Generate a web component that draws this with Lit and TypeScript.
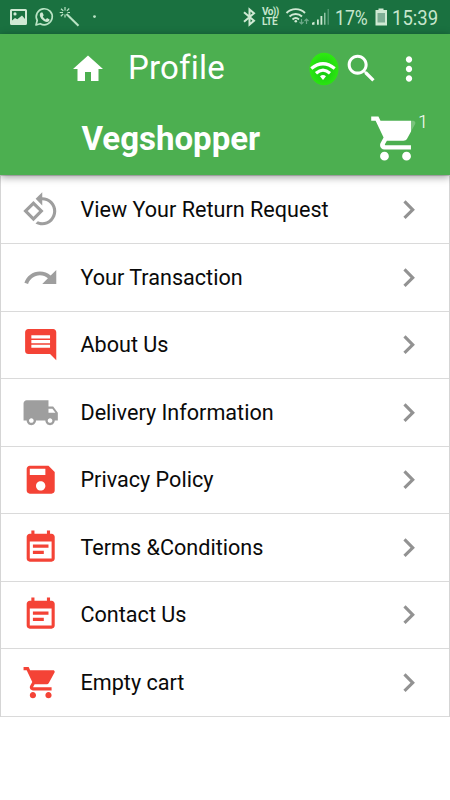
import { LitElement, html, css, svg } from "lit";
import { customElement, property } from "lit/decorators.js";

const ICONS: Record<string, string> = {
  home: "M10 20v-6h4v6h5v-8h3L12 3 2 12h3v8z",
  search:
    "M15.5 14h-.79l-.28-.27C15.41 12.59 16 11.11 16 9.5 16 5.91 13.09 3 9.5 3S3 5.91 3 9.5 5.91 16 9.5 16c1.61 0 3.09-.59 4.23-1.57l.27.28v.79l5 4.99L20.49 19l-4.99-5zm-6 0C7.01 14 5 11.99 5 9.5S7.01 5 9.5 5 14 7.01 14 9.5 11.99 14 9.5 14z",
  more: "M12 8c1.1 0 2-.9 2-2s-.9-2-2-2-2 .9-2 2 .9 2 2 2zm0 2c-1.1 0-2 .9-2 2s.9 2 2 2 2-.9 2-2-.9-2-2-2zm0 6c-1.1 0-2 .9-2 2s.9 2 2 2 2-.9 2-2-.9-2-2-2z",
  cart: "M7 18c-1.1 0-1.99.9-1.99 2S5.9 22 7 22s2-.9 2-2-.9-2-2-2zM1 2v2h2l3.6 7.59-1.35 2.45c-.16.28-.25.61-.25.96 0 1.1.9 2 2 2h12v-2H7.42c-.14 0-.25-.11-.25-.25l.03-.12.9-1.63h7.45c.75 0 1.41-.41 1.75-1.03l3.58-6.49c.08-.14.12-.31.12-.48 0-.55-.45-1-1-1H5.21l-.94-2H1zm16 16c-1.1 0-1.99.9-1.99 2s.89 2 1.99 2 2-.9 2-2-.9-2-2-2z",
  rotate:
    "M7.34 6.41L.86 12.9l6.49 6.48 6.49-6.48-6.5-6.49zM3.69 12.9l3.66-3.66L11 12.9l-3.66 3.66-3.65-3.66zm15.67-6.26C17.61 4.88 15.3 4 13 4V.76L8.76 5 13 9.24V6c1.79 0 3.58.68 4.95 2.05 2.73 2.73 2.73 7.17 0 9.9C16.58 19.32 14.79 20 13 20c-.97 0-1.94-.21-2.84-.61l-1.49 1.49C10.02 21.62 11.51 22 13 22c2.3 0 4.61-.88 6.36-2.64 3.52-3.51 3.52-9.21 0-12.72z",
  redo: "M18.4 10.6C16.55 8.99 14.15 8 11.5 8c-4.65 0-8.58 3.03-9.96 7.22L3.9 16c1.05-3.19 4.05-5.5 7.6-5.5 1.95 0 3.73.72 5.12 1.88L13 16h9V7l-3.6 3.6z",
  comment:
    "M21.99 4c0-1.1-.89-2-1.99-2H4c-1.1 0-2 .9-2 2v12c0 1.1.9 2 2 2h14l4 4-.01-18zM18 14H6v-2h12v2zm0-3H6V9h12v2zm0-3H6V6h12v2z",
  truck:
    "M20 8h-3V4H3c-1.1 0-2 .9-2 2v11h2c0 1.66 1.34 3 3 3s3-1.34 3-3h6c0 1.66 1.34 3 3 3s3-1.34 3-3h2v-5l-3-4zM6 18.5c-.83 0-1.5-.67-1.5-1.5s.67-1.5 1.5-1.5 1.5.67 1.5 1.5-.67 1.5-1.5 1.5zm13.5-9l1.96 2.5H17V9.5h2.5zm-1.5 9c-.83 0-1.5-.67-1.5-1.5s.67-1.5 1.5-1.5 1.5.67 1.5 1.5-.67 1.5-1.5 1.5z",
  save: "M17 3H5c-1.11 0-2 .9-2 2v14c0 1.1.89 2 2 2h14c1.1 0 2-.9 2-2V7l-4-4zm-5 16c-1.66 0-3-1.34-3-3s1.34-3 3-3 3 1.34 3 3-1.34 3-3 3zm3-10H5V5h10v4z",
  note: "M17 10H7v2h10v-2zm2-7h-1V1h-2v2H8V1H6v2H5c-1.11 0-1.99.9-1.99 2L3 19c0 1.1.89 2 2 2h14c1.1 0 2-.9 2-2V5c0-1.1-.9-2-2-2zm0 16H5V8h14v11zm-5-5H7v2h7v-2z",
  chevron: "M10 6L8.59 7.41 13.17 12l-4.58 4.59L10 18l6-6z",
};

@customElement("md-icon")
class MdIcon extends LitElement {
  @property() name = "";
  static styles = css`
    :host { display: block; width: 37.4px; height: 37.4px; flex: none; }
    .glyph { display: block; width: 100%; height: 100%; fill: currentColor; }
  `;
  render() {
    return html`<svg class="glyph" viewBox="0 0 24 24">${svg`<path d=${ICONS[this.name]} />`}</svg>`;
  }
}

@customElement("status-bar")
class StatusBar extends LitElement {
  static styles = css`
    :host {
      display: flex; justify-content: space-between; height: 34px; box-sizing: border-box;
      background: #1a7140; color: #c6e6cd; font-family: Roboto, sans-serif;
    }
    svg { display: block; flex: none; }
    .side { display: flex; align-items: center; height: 34px; }
    .volte {
      display: flex; flex-direction: column; width: 19px; margin-left: 6px; margin-top: -1px;
      font-size: 10px; line-height: 9.5px; font-weight: 700; white-space: nowrap;
    }
    .vo { letter-spacing: -0.6px; }
    .lte { letter-spacing: -0.2px; }
    .text { font-size: 21px; line-height: 34px; white-space: nowrap; padding-top: 2px; transform-origin: 0 50%; }
    .pct { width: 33px; margin-left: 6px; margin-right: 1px; transform: scaleX(0.84); }
    .time { width: 45px; margin-left: 5px; margin-right: 13px; transform: scaleX(0.88); }
    .battery { margin-left: 6px; }
  `;
  render() {
    return html`
      <div class="side">
        <svg width="100" height="34" viewBox="0 0 100 34">
          <path fill="#cfe9d3" fill-rule="evenodd" d="M11.5 9h14a1.5 1.5 0 0 1 1.5 1.5v13a1.5 1.5 0 0 1-1.5 1.5h-14a1.5 1.5 0 0 1-1.5-1.5v-13A1.5 1.5 0 0 1 11.5 9zM12 11v9.500l3-2.500 2.300 1.300 4.700-3.800 3 3.500v-8zM15 12.300a1.600 1.600 0 1 1 0 3.200 1.600 1.600 0 0 1 0-3.200z" />
          <path fill="none" stroke="#b9e3c4" stroke-width="1.700" stroke-linejoin="round" d="M36 25l1.200-4.500A8 8 0 1 1 40.300 23.700z" />
          <path fill="#cfe9d3" d="M41 12.600l1.500-.2 1.200 2.900-.9 1.200c.7 1.500 1.700 2.300 3 2.900l1.200-1.300 2.600 1.300c.1 1.500-1.300 2.500-2.600 2.500-3.500-.4-6.800-3.600-7.200-6.700 0-1.200.5-2.100 1.200-2.600z" />
          <g stroke="#b9e3c4" fill="none">
            <path stroke-width="2.100" d="M66.500 14l12 11.700" />
            <path stroke-width="1.200" d="M65 7v3.500M65 14.500v3M59.700 12.500H63M67.500 12.500H70M61 8.700l2.300 2.200M69.200 8.500l-2.300 2.300M63.200 14l-2.400 2.300" />
          </g>
          <circle cx="94.500" cy="16.600" r="1.400" fill="#b9e3c4" />
        </svg>
      </div>
      <div class="side">
        <svg width="14" height="34" viewBox="0 0 14 34">
          <path fill="none" stroke="#cfe9d3" stroke-width="2" d="M2 12.300l10 8.400L7.500 24.500V9.500L12 13.300 2 21.700" />
        </svg>
        <div class="volte"><span class="vo">Vo))</span><span class="lte">LTE</span></div>
        <svg width="48" height="34" viewBox="0 0 48 34">
          <g fill="none" stroke="#cfe9d3" stroke-width="1.900">
            <path d="M5.500 13a13 13 0 0 1 18.500 0M8.500 16.500a9 9 0 0 1 12.500 0M11.500 19.500a5 5 0 0 1 6.500 0" />
          </g>
          <circle cx="14.800" cy="21.300" r="1.300" fill="#cfe9d3" />
          <path fill="none" stroke="#6da989" stroke-width="1.200" d="M20.500 19v5M18.500 22l2 2 2-2M25.500 24v-5M23.500 21l2-2 2 2" />
          <path fill="#cfe9d3" d="M31 22.800l2.500-1v3H31zM36 19.500h1.800v5.300H36zM39.500 16h1.800v8.800h-1.800z" />
          <path fill="#8fc3a4" d="M43 12.700h1.500v12.100H43z" />
          <path fill="#4f9670" d="M46.500 9H48v15.800h-1.500z" />
        </svg>
        <span class="text pct">17%</span>
        <svg class="battery" width="12" height="34" viewBox="0 0 12 34">
          <path fill="#cfe9d3" d="M3.500 8.500h5V10H12v15.500H.500V10h3z" />
          <path fill="#7fae95" d="M2.500 13h7.500v9.500H2.500z" />
        </svg>
        <span class="text time">15:39</span>
      </div>
    `;
  }
}

@customElement("menu-row")
class MenuRow extends LitElement {
  @property() icon = "";
  @property() label = "";
  @property() tone = "";
  static styles = css`
    :host {
      display: flex; align-items: center; height: 67.5px; box-sizing: border-box;
      padding-left: 21px; padding-right: 21.500px; border-bottom: 1.500px solid #dadada;
      font-family: Roboto, sans-serif;
    }
    .lead { color: #9e9e9e; }
    .lead.red { color: #f44336; }
    .label { flex: 1; margin-left: 21.100px; font-size: 21.6px; color: #0a0a0a; white-space: nowrap; }
    .go { color: #929292; }
  `;
  render() {
    return html`
      <md-icon class="lead ${this.tone}" name=${this.icon}></md-icon>
      <span class="label">${this.label}</span>
      <md-icon class="go" name="chevron"></md-icon>
    `;
  }
}

const ROWS = [
  ["rotate", "View Your Return Request", "grey"],
  ["redo", "Your Transaction", "grey"],
  ["comment", "About Us", "red"],
  ["truck", "Delivery Information", "grey"],
  ["save", "Privacy Policy", "red"],
  ["note", "Terms &Conditions", "red"],
  ["note", "Contact Us", "red"],
  ["cart", "Empty cart", "red"],
];

@customElement("app-root")
class AppRoot extends LitElement {
  static styles = css`
    :host {
      display: flex; flex-direction: column; width: 450px; height: 800px; overflow: hidden;
      background: #fff; font-family: Roboto, sans-serif;
    }
    .header {
      height: 140.5px; flex: none; background: #4caf50; color: #fff; position: relative;
      box-shadow: 0 2px 8px rgba(0, 0, 0, 0.4);
    }
    .bar { display: flex; align-items: center; height: 69px; }
    .home { width: 36px; height: 36px; margin-left: 70px; }
    .title { flex: 1; margin-left: 22px; margin-top: -2px; font-size: 33px; letter-spacing: 0.2px; }
    .signal { display: block; width: 30px; height: 34px; }
    .search { width: 37px; height: 37px; margin-left: 4px; }
    .more { width: 38px; height: 38px; margin-left: 10.500px; margin-right: 22px; }
    .brand { display: flex; align-items: center; height: 70.500px; }
    .name { flex: 1; margin-left: 81.500px; font-size: 33px; font-weight: 700; }
    .basket { position: relative; width: 53px; height: 53px; margin-right: 28px; }
    .big { width: 53px; height: 53px; }
    .badge {
      position: absolute; left: 41.500px; top: -3px; width: 25px; height: 25px;
      background: rgba(76, 175, 80, 0.75); font-size: 18px; font-weight: 300; line-height: 25px; text-align: center;
    }
    .list { border: 1.500px solid #d5d5d5; border-bottom: none; margin-top: 0.500px; padding-top: 0.600px; }
  `;
  render() {
    return html`
      <status-bar></status-bar>
      <header class="header">
        <div class="bar">
          <md-icon class="home" name="home"></md-icon>
          <span class="title">Profile</span>
          <svg class="signal" viewBox="0 0 30 34">
            <defs>
              <radialGradient id="glow" cx="50%" cy="55%" r="55%">
                <stop offset="0" stop-color="#14c814" />
                <stop offset="1" stop-color="#2fea10" />
              </radialGradient>
            </defs>
            <ellipse cx="15" cy="17" rx="14.500" ry="16.300" fill="url(#glow)" />
            <g fill="none" stroke="#fff" stroke-width="3.200">
              <path d="M2.300 16.500Q14 7 25.700 16.500" />
              <path d="M7 21.200Q14 15 21 21.200" />
            </g>
            <path fill="#fff" d="M11 24.300q3-2.400 6 0L14 28z" />
          </svg>
          <md-icon class="search" name="search"></md-icon>
          <md-icon class="more" name="more"></md-icon>
        </div>
        <div class="brand">
          <span class="name">Vegshopper</span>
          <div class="basket">
            <md-icon class="big" name="cart"></md-icon>
            <span class="badge">1</span>
          </div>
        </div>
      </header>
      <main class="list">
        ${ROWS.map(([icon, label, tone]) => html`<menu-row icon=${icon} label=${label} tone=${tone}></menu-row>`)}
      </main>
    `;
  }
}
